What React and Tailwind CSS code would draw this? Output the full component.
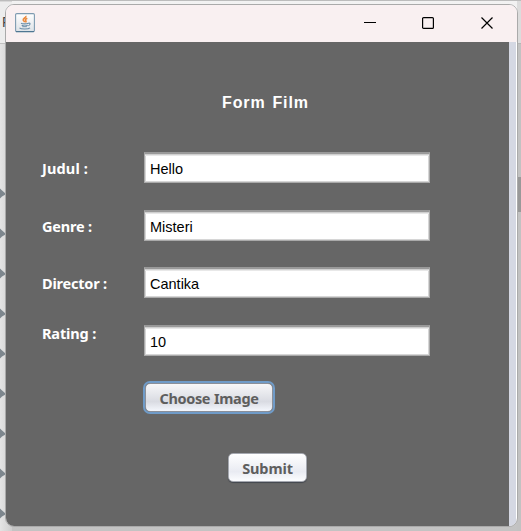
const fields = [
  { label: "Judul :", value: "Hello", rowClass: "mt-[36px]", labelClass: "pt-[6px] tracking-[0.15px]" },
  { label: "Genre :", value: "Misteri", rowClass: "mt-[27px]", labelClass: "pt-[6px] tracking-[-0.2px]" },
  { label: "Director :", value: "Cantika", rowClass: "mt-[26px]", labelClass: "pt-[6px] tracking-[-0.2px]" },
  { label: "Rating :", value: "10", rowClass: "mt-[27px]", labelClass: "-mt-[2px] tracking-[-0.15px]" },
];

const arrows = [0, 1, 2, 3, 4, 5, 6, 7, 8];

function JavaIcon() {
  return (
    <svg className="h-5 w-5" viewBox="0 0 20 20" fill="none">
      <defs>
        <linearGradient id="tile" x1="0" y1="0" x2="0" y2="1">
          <stop offset="0" stopColor="#ffffff" />
          <stop offset="1" stopColor="#dde2e7" />
        </linearGradient>
      </defs>
      <rect x="0.6" y="0.6" width="18.8" height="18.2" rx="1.2" fill="url(#tile)" stroke="#7e9bb0" strokeWidth="1.1" />
      <path d="M1 18.6h18" stroke="#47718e" />
      <path d="M10.8 2.8c1 1.7-3 2.5-2.6 4.2.1.9 1.3 1.3 1.3 2.2M12.3 5.2c-1.7.8-2.3 1.5-1.5 2.5.5.6.2 1.2-.3 1.6" stroke="#ec8a3d" strokeWidth="1.6" />
      <path d="M6 10.3c1.5.8 5.500.8 7.500 0M6.700 12.200c1.600.8 4.600.8 6 0M13.500 10.200c2.200-.5 2 2-.2 2.500M4.500 14.800c1.500 1.700 9 1.600 10.500 0" stroke="#6b8ea8" strokeWidth="1.100" />
      <path d="M7.300 13.700h4.500" stroke="#7798af" />
    </svg>
  );
}

function Backdrop() {
  return (
    <div className="flex h-full justify-between bg-gradient-to-b from-[#f2f2f2] to-[#c3c3c3]">
      <div className="flex w-[12px] flex-col overflow-hidden border-t border-[#d8d8d8] bg-gradient-to-r from-[#e4e4e4] to-[#cecece]">
        <div className="h-[42px] shrink-0 border-b border-[#c0c0c0] bg-[#ededed] pt-[11px] pl-[2px] font-['Liberation_Sans',sans-serif] text-[14px] leading-[18px] text-[#444]">F</div>
        <div className="mt-[144px] flex flex-col gap-[28px]">
          {arrows.map((n) => (
            <svg key={n} className="h-[12px] w-[6px] shrink-0" viewBox="0 0 6 12">
              <path d="M0 .5l1.500 1.500 4 3.500v1L2 8.500 0 10.500z" fill="#7d868d" />
            </svg>
          ))}
        </div>
      </div>
      <div className="flex w-[4px] flex-col bg-[#c2c2c2]">
        <div className="h-[43px] border-b border-[#b5b5b5] bg-[#dcdcdc]" />
        <div className="mt-[133px] h-[35px] bg-[#999]" />
      </div>
    </div>
  );
}

function TitleBar() {
  return (
    <header className="flex h-[37px] shrink-0 items-start justify-between bg-[#f9f0f1] pt-[8px] pl-[9px]">
      <JavaIcon />
      <div className="flex gap-[46px] pt-[4px] pr-[23px]">
        <svg className="h-[13px] w-[13px]" viewBox="0 0 13 13"><path d="M1 5.500h12" stroke="#000" fill="none" /></svg>
        <svg className="h-[13px] w-[13px]" viewBox="0 0 13 13"><rect x=".6" y=".6" width="10.800" height="10.800" rx="1" stroke="#000" strokeWidth="1.200" fill="none" /></svg>
        <svg className="h-[13px] w-[13px]" viewBox="0 0 13 13"><path d="M.5.500l11 11m0-11l-11 11" stroke="#000" strokeWidth="1.200" fill="none" /></svg>
      </div>
    </header>
  );
}

export default function App() {
  return (
    <div className="relative h-[531px] w-[521px] overflow-hidden border-t border-[#bcbcbc]">
      <Backdrop />
      <main className="absolute top-[3px] left-[5px] flex h-[523px] w-[513px] flex-col overflow-hidden rounded-[9px] border border-[#aaa] bg-white">
        <TitleBar />
        <div className="flex grow">
          <form className="flex w-[503px] flex-col bg-[#666] font-['Noto_Sans',sans-serif] text-[14.5px] font-bold">
            <h1 className="mt-[51px] pl-[216px] font-['Liberation_Sans',sans-serif] text-[16px] leading-[20px] tracking-[0.9px] [word-spacing:1.5px] text-white">Form Film</h1>
            <div className="mt-[3px] flex flex-col">
              {fields.map((f) => (
                <div key={f.label} className={`flex h-[31px] items-start pl-[36px] ${f.rowClass}`}>
                  <label className={`w-[102px] shrink-0 text-[14.5px] leading-[20px] text-white ${f.labelClass}`}>{f.label}</label>
                  <input
                    readOnly
                    value={f.value}
                    className="h-[31px] w-[286px] border border-t-2 border-t-[#999] border-r-[#aaa] border-b-[#aaa] border-l-[#aaa] bg-white pt-[1px] pl-[5px] font-['Liberation_Sans',sans-serif] text-[14.5px] font-normal text-black shadow-[inset_0_1px_0_#cfcfcf,inset_0_2px_0_#e8e8e8,inset_0_0_0_1px_#d6d6d6] outline-none"
                  />
                </div>
              ))}
            </div>
            <button type="button" className="mt-[27px] ml-[139px] h-[29px] w-[128px] rounded-[5px] border border-[#8b8f98] bg-gradient-to-b from-[#f7f7f9] via-[#d9dbe2] via-65% to-[#f4f7fd] pt-[2px] tracking-[-0.35px] [word-spacing:0.5px] text-[#5e5e5e] shadow-[0_0_0_2px_#6f9bc8]">Choose Image</button>
            <button type="button" className="mt-[41px] ml-[222px] h-[29px] w-[79px] rounded-[5px] border border-[#a5a8b0] bg-gradient-to-b from-[#fff] via-[#e9ebf2] via-65% to-[#fcfdff] pt-[2px] tracking-[-0.1px] text-[#5e5e5e] shadow-[0_1px_1px_#42464e]">Submit</button>
          </form>
          <div className="w-[7px] bg-[#d5d8e3]" />
        </div>
      </main>
    </div>
  );
}
